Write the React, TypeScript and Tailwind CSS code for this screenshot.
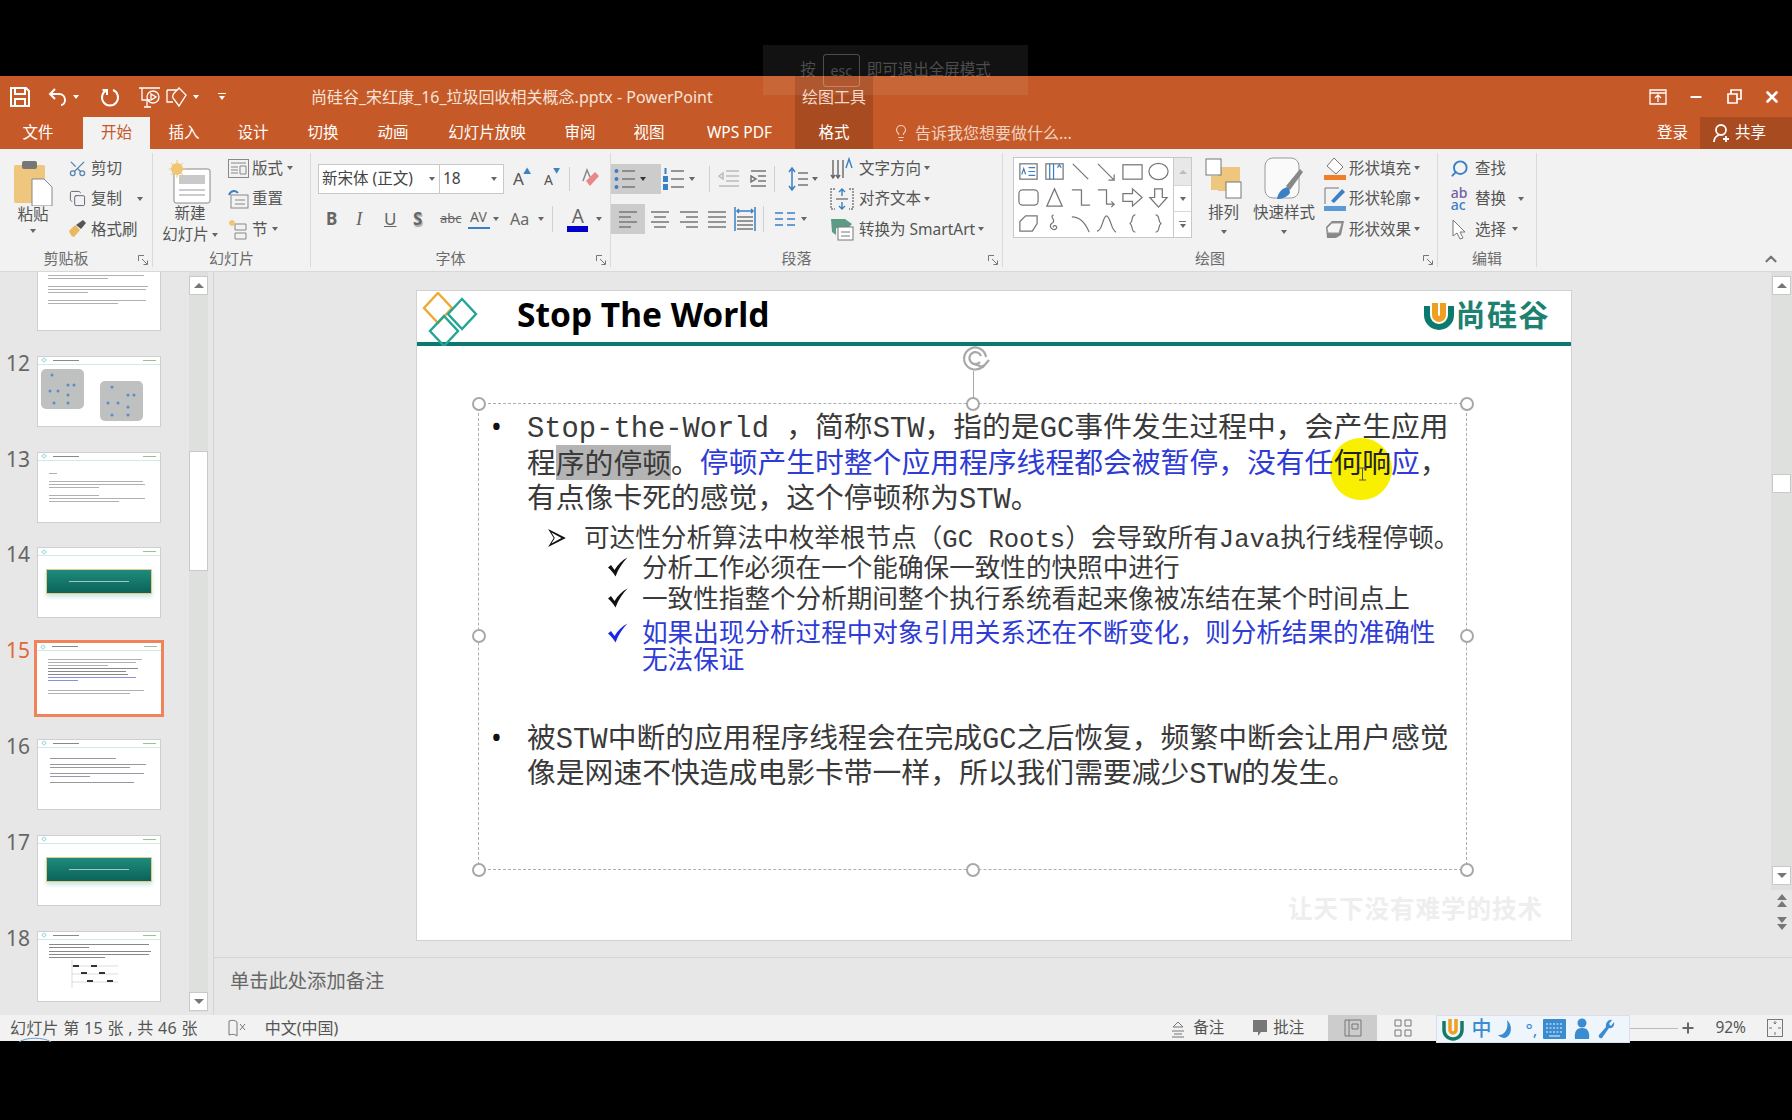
import type { ReactNode } from "react";
import { ChevronUp, Copy, Lightbulb, Scissors, Search, X, Minus, Plus } from "lucide-react";

const tabs = [
  { label: "文件", w: "w-[83px] pr-[7px]" },
  { label: "开始", w: "w-[67px]", active: true },
  { label: "插入", w: "w-[68px]" },
  { label: "设计", w: "w-[70px]" },
  { label: "切换", w: "w-[70px]" },
  { label: "动画", w: "w-[70px]" },
  { label: "幻灯片放映", w: "w-[118px]" },
  { label: "审阅", w: "w-[68px]" },
  { label: "视图", w: "w-[70px]" },
  { label: "WPS PDF", w: "w-[111px]" },
  { label: "格式", w: "w-[78px]", context: true },
];

function Caret({ className = "" }: { className?: string }) {
  return <span className={`inline-block h-0 w-0 border-x-[3.5px] border-t-[4px] border-x-transparent border-t-[#666] ${className}`} />;
}

function Group({ label, w, launcher, children }: { label: string; w: string; launcher?: boolean; children: ReactNode }) {
  return (
    <div className={`relative flex shrink-0 flex-col border-r border-[#D9DAD9] ${w}`}>
      <div className="flex h-[97px]">{children}</div>
      <div className={`flex h-[18px] items-center justify-center text-[15px] text-[#6b6b6b] ${launcher ? "pr-[20px]" : ""}`}>{label}</div>
      {launcher && (
        <svg className="absolute bottom-[2px] right-[4px] h-[10px] w-[10px]" viewBox="0 0 10 10" fill="none" stroke="#777">
          <path d="M.5 6V.5H6M4 4l5 5M5.5 9.5h4v-4" />
        </svg>
      )}
    </div>
  );
}

function Row({ icon, label, caret, gap = "gap-[3px]", iconBox = "w-[22px]" }: { icon: ReactNode; label: string; caret?: boolean; gap?: string; iconBox?: string }) {
  return (
    <div className={`flex h-[30.5px] items-center whitespace-nowrap text-[15.5px] text-[#555] ${gap}`}>
      <span className={`flex shrink-0 justify-center ${iconBox}`}>{icon}</span>
      <span>{label}</span>
      {caret && <Caret className="ml-[1px]" />}
    </div>
  );
}

function Lines({ rows, color = "#b0b0b0" }: { rows: number[]; color?: string }) {
  return (
    <div className="flex flex-col gap-[2px]">
      {rows.map((width, i) => (
        <div key={i} className="h-px" style={{ width, backgroundColor: color }} />
      ))}
    </div>
  );
}

function ThumbHeader({ title }: { title?: boolean }) {
  return (
    <div className="flex h-[8px] items-center justify-between border-b border-[#D3E9E3] px-[4px]">
      <span className="h-[4px] w-[4px] rotate-45 border border-[#9dd]" />
      {title && <span className="ml-[7px] mr-auto h-px w-[26px] bg-[#888]" />}
      <span className="h-px w-[13px] bg-[#9bbf8f]" />
    </div>
  );
}

function Banner() {
  return (
    <div className="mx-auto mt-[13px] flex h-[25px] w-[106px] items-center justify-center border border-[#E9C98A] bg-gradient-to-b from-[#1E8B7C] to-[#0B6358] shadow-[0_3px_4px_#cfe6e0]">
      <span className="h-px w-[60px] bg-white/60" />
    </div>
  );
}

function Thumb({ n, children, current, cut }: { n: number; children?: ReactNode; current?: boolean; cut?: boolean }) {
  return (
    <div className="flex h-[71px] shrink-0 items-start">
      <span className={`w-[37px] pl-[6px] text-[21px] leading-[15px] ${current ? "text-[#E0673A]" : "text-[#666]"} ${cut ? "invisible" : ""}`}>{n}</span>
      <div className={`h-[71px] w-[124px] overflow-hidden bg-white ${current ? "outline-[3px] outline-[#F0835A]" : "border border-[#CFCFCF]"}`}>{children}</div>
    </div>
  );
}

function ArrowButton({ dir, className = "" }: { dir: "up" | "down"; className?: string }) {
  return (
    <div className={`flex w-[19px] shrink-0 items-center justify-center border border-[#C9C9C9] bg-white ${className}`}>
      <span className={`h-0 w-0 border-x-[5px] border-x-transparent ${dir === "up" ? "border-b-[5px] border-b-[#777]" : "border-t-[5px] border-t-[#777]"}`} />
    </div>
  );
}

function Handle({ className }: { className: string }) {
  return <span className={`absolute z-20 h-[14px] w-[14px] rounded-full border-[2.5px] border-[#A8A8A8] bg-white ${className}`} />;
}

const Mono = ({ children }: { children: ReactNode }) => <span className="font-[family-name:'Liberation_Mono',monospace] leading-none">{children}</span>;

function SubItem({ mark, children, className = "" }: { mark: ReactNode; children: ReactNode; className?: string }) {
  return (
    <div className={`flex whitespace-nowrap ${className}`}>
      <span className="flex w-[64px] shrink-0 justify-center">{mark}</span>
      <div>{children}</div>
    </div>
  );
}

function CheckMark({ color = "#111" }: { color?: string }) {
  return (
    <svg className="mt-[3px] h-[22px] w-[22px]" viewBox="0 0 22 22" fill={color}>
      <path d="M1 11.500l3-2.500 3.500 5C11 8.500 15 4 20.500 1.500 15.500 6.500 11.500 12.500 8.500 20.500 6.500 17 4 14 1 11.500z" />
    </svg>
  );
}

function ListIcon({ numbered }: { numbered?: boolean }) {
  return (
    <svg className="h-[26px] w-[24px]" viewBox="0 0 24 26" stroke="#777" strokeWidth="1.3">
      <path d="M9 5h13M9 13h13M9 21h13" />
      {numbered ? (
        <g fill="#3B7FC4" stroke="none"><rect x="2.500" y="2" width="2" height="6" /><rect x="1" y="10" width="5" height="6" /><rect x="1" y="18" width="5" height="6" /></g>
      ) : (
        <g fill="#3B7FC4" stroke="none"><circle cx="3.500" cy="5" r="2" /><circle cx="3.500" cy="13" r="2" /><circle cx="3.500" cy="21" r="2" /></g>
      )}
    </svg>
  );
}

function AlignIcon({ rows }: { rows: string[] }) {
  return (
    <svg className="h-[20px] w-[22px]" viewBox="0 0 22 20" stroke="#777" strokeWidth="1.4">
      {rows.map((d, i) => <path key={i} d={d} />)}
    </svg>
  );
}

const gallery = [
  <g key="a"><rect x="3" y="4" width="18" height="16" /><path d="M5 15l2-6 2 6M12 8h7M12 12h7M12 16h7" stroke="#3B7FC4" /></g>,
  <g key="b"><rect x="3" y="4" width="18" height="16" /><path d="M7 4v16M11 4v16M15 8l2-3 2 3" stroke="#3B7FC4" /></g>,
  <path key="c" d="M4 4l16 16" />,
  <path key="d" d="M3 4l17 17M14 21h6v-6" />,
  <rect key="e" x="2" y="5" width="20" height="15" />,
  <ellipse key="f" cx="12" cy="12" rx="10" ry="8.500" />,
  <rect key="g" x="2" y="4" width="20" height="16" rx="4" />,
  <path key="h" d="M12 3l8 18H4z" />,
  <path key="i" d="M3 4h10v16h9" />,
  <path key="j" d="M3 4h9v15h8M17 16l3 3-3 3" />,
  <path key="k" d="M2 8h10V3l10 9-10 9v-5H2z" />,
  <path key="l" d="M8 3h8v9h5l-9 10-9-10h5z" />,
  <path key="m" d="M3 20V10l6-6h12v8l-5 8z" />,
  <path key="n" d="M11 3C6 5 15 9 9 12c-4 3 2 9 5 5 2-3-5-4-3-1" />,
  <path key="o" d="M3 5c8 0 14 6 18 16" />,
  <path key="p" d="M2 20C8 20 8 4 12 4s5 16 10 17" />,
  <path key="q" d="M15 3c-5 0-2 8-6 9 4 1 1 9 6 9" />,
  <path key="r" d="M9 3c5 0 2 8 6 9-4 1-1 9-6 9" />,
];

export default function App() {
  return (
    <div lang="zh-CN" className="relative flex h-[1120px] w-[1792px] flex-col overflow-hidden bg-black font-[family-name:'Noto_Sans','Noto_Sans_CJK_SC',sans-serif]">
      <div className="h-[76px] shrink-0" />

      {/* title bar */}
      <div className="relative flex h-[41px] shrink-0 items-center bg-[#C55A28] pl-[9px] text-white">
        <svg className="h-[22px] w-[22px]" viewBox="0 0 22 22" fill="none" stroke="#fff" strokeWidth="2"><path d="M2 2h15l3 3v15H2zM6 2v6h10V2M6 20v-7h10v7" /></svg>
        <svg className="ml-[17px] h-[20px] w-[20px]" viewBox="0 0 20 20" fill="none" stroke="#fff" strokeWidth="2"><path d="M7 2L2 7l5 5M2 7h9c4 0 6 3 6 6s-2 5-4 5" /></svg>
        <Caret className="ml-[5px] !border-t-white" />
        <svg className="ml-[21px] h-[20px] w-[20px]" viewBox="0 0 20 20" fill="none" stroke="#fff" strokeWidth="2"><path d="M7 3a8 8 0 1 0 6 0M7 2v6M2.500 3H7" /></svg>
        <svg className="ml-[18px] h-[24px] w-[24px]" viewBox="0 0 24 24" fill="none" stroke="#fff" strokeWidth="1.3"><path d="M1 3h21M4 3v12h8M13 22H6M9 16v6" /><circle cx="15" cy="12" r="6" /><path d="M13 9v6l5-3z" /></svg>
        <svg className="ml-[3px] h-[24px] w-[24px]" viewBox="0 0 24 24" fill="none" stroke="#fff" strokeWidth="1.3"><path d="M2 5h10M2 5v12h6" /><path d="M14 3l7 7-7 11-6-8c-2-4 3-6 6-10z" /></svg>
        <Caret className="ml-[4px] !border-t-white" />
        <span className="ml-[19px] flex flex-col items-center gap-[2px]"><span className="h-[1.5px] w-[8px] bg-white" /><Caret className="!border-t-white" /></span>
        <span className="absolute left-[311px] whitespace-nowrap text-[16px] text-[#F6E4DA]">尚硅谷_宋红康_16_垃圾回收相关概念.pptx - PowerPoint</span>
        <div className="absolute inset-y-0 left-[795px] flex w-[78px] items-center justify-center bg-[#A94B20] text-[16px] text-[#F4D8C8]">绘图工具</div>
        <div className="ml-auto flex items-center">
          <svg className="mr-[21px] h-[16px] w-[18px]" viewBox="0 0 18 16" fill="none" stroke="#fff" strokeWidth="1.3"><path d="M1 1h16v14H1zM1 4h16M9 13V7M6 9l3-3 3 3" /></svg>
          <Minus className="mr-[23px] h-[16px] w-[16px]" strokeWidth={3} />
          <svg className="mr-[21px] h-[15px] w-[15px]" viewBox="0 0 15 15" fill="none" stroke="#fff" strokeWidth="1.7"><path d="M1 5h9v9H1zM4 5V1h10v9h-4" /></svg>
          <X className="mr-[11px] h-[18px] w-[18px]" strokeWidth={3.5} />
        </div>
      </div>

      {/* tabs */}
      <div className="flex h-[32px] shrink-0 items-stretch bg-[#C55A28] text-[15.5px] text-white">
        {tabs.map((t) => (
          <div key={t.label} className={`flex items-center justify-center whitespace-nowrap ${t.w} ${t.active ? "bg-[#F1F2F1] text-[#C9562A]" : ""} ${t.context ? "bg-[#A94B20]" : ""}`}>
            {t.label}
          </div>
        ))}
        <div className="ml-[19px] flex items-center gap-[5px] text-[16px] text-[#F1D2C0]">
          <Lightbulb className="h-[18px] w-[18px]" strokeWidth={1.5} />
          告诉我您想要做什么...
        </div>
        <span className="ml-auto flex items-center pr-[12px] text-white">登录</span>
        <div className="flex w-[92px] items-center gap-[3px] bg-[#A94B20] pl-[12px]">
          <svg className="h-[20px] w-[20px]" viewBox="0 0 20 20" fill="none" stroke="#fff" strokeWidth="1.8"><circle cx="9" cy="7" r="5" /><path d="M2 19c0-4 2-6 5-7M14 13v6M11 16h6" /></svg>
          共享
        </div>
      </div>

      {/* ribbon */}
      <div className="relative flex h-[123px] shrink-0 border-b border-[#D8D8D8] bg-[#F1F2F1] py-[4px]">
        <Group label="剪贴板" w="w-[153px]" launcher>
          <div className="flex w-[66px] flex-col items-center pt-[7px] text-[15.5px] text-[#555]">
            <svg className="h-[46px] w-[40px]" viewBox="0 0 40 46">
              <rect x="1" y="5" width="31" height="38" rx="2" fill="#EFC67E" />
              <rect x="9" y="1" width="15" height="8" rx="2" fill="#777" />
              <path d="M19 19h12l8 8v19H19z" fill="#fff" stroke="#888" />
            </svg>
            <span className="-mt-[2px] leading-[20px]">粘贴</span>
            <Caret className="mt-[5px]" />
          </div>
          <div className="flex flex-col">
            <Row icon={<Scissors className="h-[19px] w-[19px] -scale-x-100 rotate-90 text-[#5A84B0]" strokeWidth={1.6} />} label="剪切" />
            <div className="flex items-center"><Row icon={<Copy className="h-[17px] w-[17px] text-[#667]" strokeWidth={1.4} />} label="复制" /><Caret className="ml-[15px]" /></div>
            <Row icon={<svg className="h-[20px] w-[20px]" viewBox="0 0 20 20"><path d="M2 12l6-6 5 5-6 7c-2 0-4-3-5-6z" fill="#E8B860" /><path d="M9 6l7-5 3 3-5 6z" fill="#555" /></svg>} label="格式刷" />
          </div>
        </Group>

        <Group label="幻灯片" w="w-[158px]">
          <div className="flex w-[74px] flex-col items-center pt-[7px] text-[15.5px] leading-[21px] text-[#555]">
            <svg className="h-[44px] w-[42px]" viewBox="0 0 42 44" fill="none">
              <rect x="5" y="9" width="36" height="34" rx="2" fill="#fff" stroke="#888" />
              <rect x="10" y="15" width="26" height="9" fill="#C9C9C9" />
              <path d="M10 30h26M10 35h26" stroke="#999" />
              <circle cx="8" cy="9" r="6" fill="#F0C674" />
              <path d="M8 0v18M-1 9h18M2 3l12 12M14 3L2 15" stroke="#F0C674" />
            </svg>
            <span className="-mt-[1px]">新建</span>
            <span className="flex items-center gap-[3px] whitespace-nowrap">幻灯片<Caret /></span>
          </div>
          <div className="flex flex-col">
            <Row caret icon={<svg className="h-[19px] w-[21px]" viewBox="0 0 21 19" fill="none" stroke="#888"><rect x=".5" y=".5" width="20" height="18" /><path d="M3 4h15M3 8h7M3 11h7M3 14h7M12 7h6v8h-6z" /></svg>} label="版式" />
            <Row icon={<svg className="h-[20px] w-[21px]" viewBox="0 0 21 20" fill="none" stroke="#888"><rect x="3" y="6" width="17" height="13" /><path d="M1 6c2-5 7-5 9-2" stroke="#3B7FC4" strokeWidth="2" /><path d="M7 11h10M7 15h10" /></svg>} label="重置" />
            <Row caret icon={<svg className="h-[21px] w-[20px]" viewBox="0 0 20 21" fill="none" stroke="#888"><path d="M7 5h11v6H7zM7 14h11v6H7z" /><circle cx="4" cy="4" r="2.500" fill="#F0C674" stroke="#F0C674" /></svg>} label="节" />
          </div>
        </Group>

        <Group label="字体" w="w-[300px]" launcher>
          <div className="flex flex-col pl-[7px] pt-[11px]">
            <div className="flex items-center">
              <div className="flex h-[30px] w-[122px] items-center justify-between border border-[#C8C8C8] bg-white pl-[3px] pr-[4px] text-[15.5px] text-[#444]">新宋体 (正文)<Caret /></div>
              <div className="flex h-[30px] w-[64px] items-center justify-between border border-l-0 border-[#C8C8C8] bg-white pl-[3px] pr-[6px] text-[15.5px] text-[#444]">18<Caret /></div>
              <span className="relative ml-[9px] w-[24px] text-[17px] text-[#555]">A<span className="absolute -top-[1px] left-[10px] text-[8px] text-[#3B7FC4]">▲</span></span>
              <span className="relative ml-[7px] w-[24px] text-[14px] text-[#555]">A<span className="absolute -top-[3px] left-[9px] text-[7px] text-[#3B7FC4]">▼</span></span>
              <span className="ml-[1px] h-[24px] w-px bg-[#D0D0D0]" />
              <svg className="ml-[10px] h-[22px] w-[22px]" viewBox="0 0 22 22"><path d="M10 18l9-10-4-4-9 9z" fill="#E9888A" /><path d="M3 13L7 2l3 7" fill="none" stroke="#888" strokeWidth="1.5" /></svg>
            </div>
            <div className="mt-[10px] flex h-[30px] items-center text-[17px] text-[#666]">
              <span className="ml-[8px] w-[27px] font-bold">B</span>
              <span className="w-[31px] pl-[3px] font-[family-name:'Liberation_Serif',serif] text-[19px] italic">I</span>
              <span className="w-[29px] underline">U</span>
              <span className="w-[27px] font-bold [text-shadow:1px_2px_1px_#aaa]">S</span>
              <span className="w-[25px] text-[13px] line-through">abc</span>
              <span className="flex w-[27px] flex-col items-center text-[14px] leading-[14px]">AV<span className="h-[5px] w-[22px] border-b-2 border-[#3B7FC4]" /></span>
              <Caret className="ml-[1px]" />
              <span className="ml-[11px] text-[16px]">Aa</span>
              <Caret className="ml-[9px]" />
              <span className="ml-[8px] h-[26px] w-px bg-[#D0D0D0]" />
              <span className="ml-[14px] flex w-[21px] flex-col items-center text-[19px] leading-[20px]">A<span className="h-[6px] w-[21px] bg-[#0000C8]" /></span>
              <Caret className="ml-[8px]" />
            </div>
          </div>
        </Group>

        <Group label="段落" w="w-[392px]" launcher>
          <div className="flex w-[216px] flex-col pt-[11px]">
            <div className="flex h-[30px] items-center">
              <span className="flex h-[30px] w-[50px] items-center gap-[3px] bg-[#CBCCCB] pl-[2px]"><ListIcon /><Caret className="!border-t-[#333]" /></span>
              <span className="ml-[1px] flex items-center gap-[3px]"><ListIcon numbered /><Caret /></span>
              <span className="ml-[14px] h-[26px] w-px bg-[#D0D0D0]" />
              <svg className="ml-[8px] h-[22px] w-[50px]" viewBox="0 0 50 22" strokeWidth="1.5" fill="none"><path d="M8 3h13M8 8h13M8 13h13M1 8l4-3v6zM1 18h20" stroke="#BBB" /><path d="M33 3h15M40 8h8M40 13h8M33 18h15M33 8l5 3-5 3z" stroke="#777" /></svg>
              <span className="ml-[6px] h-[26px] w-px bg-[#D0D0D0]" />
              <svg className="ml-[12px] h-[26px] w-[22px]" viewBox="0 0 22 26" strokeWidth="1.5" fill="none"><path d="M5 2v22M2 6l3-4 3 4M2 20l3 4 3-4" stroke="#3B7FC4" /><path d="M11 7h10M11 13h10M11 19h10" stroke="#777" /></svg>
              <Caret className="ml-[3px]" />
            </div>
            <div className="mt-[10px] flex h-[30px] items-center">
              <span className="flex h-[30px] w-[34px] items-center justify-center bg-[#CBCCCB]"><AlignIcon rows={["M2 3h18M2 8h12M2 13h18M2 18h12"]} /></span>
              <span className="ml-[4px]"><AlignIcon rows={["M2 3h18M5 8h12M2 13h18M5 18h12"]} /></span>
              <span className="ml-[7px]"><AlignIcon rows={["M2 3h18M8 8h12M2 13h18M8 18h12"]} /></span>
              <span className="ml-[6px]"><AlignIcon rows={["M2 3h18M2 8h18M2 13h18M2 18h18"]} /></span>
              <svg className="ml-[6px] h-[26px] w-[22px]" viewBox="0 0 22 26" strokeWidth="1.5" fill="none"><path d="M1 1v24M21 1v24M3 5h16M5 3L3 5l2 2M17 3l2 2-2 2" stroke="#3B7FC4" /><path d="M3 11h16M3 15h16M3 19h16M3 23h16" stroke="#777" /></svg>
              <span className="ml-[7px] h-[26px] w-px bg-[#D0D0D0]" />
              <svg className="ml-[10px] h-[20px] w-[22px]" viewBox="0 0 22 20" stroke="#3B7FC4" strokeWidth="1.5"><path d="M1 4h8M1 10h8M1 16h8M13 4h8M13 10h8M13 16h8" /></svg>
              <Caret className="ml-[5px]" />
            </div>
          </div>
          <div className="flex flex-col">
            <Row caret gap="gap-[2px]" iconBox="w-[30px]" icon={<svg className="h-[24px] w-[24px]" viewBox="0 0 24 24" fill="none" stroke="#666" strokeWidth="1.4"><path d="M3 4v18M8 4v18M13 4v18M1 19l2 3 2-3M6 19l2 3 2-3" /><path d="M16 12l3-9 3 9" stroke="#3B7FC4" /></svg>} label="文字方向" />
            <Row caret gap="gap-[2px]" iconBox="w-[30px]" icon={<svg className="h-[24px] w-[24px]" viewBox="0 0 24 24" fill="none" strokeWidth="1.4"><path d="M5 2H1v20h4M19 2h4v20h-4" stroke="#777" strokeDasharray="2 1" /><path d="M12 2v7M9 5l3-3 3 3M12 22v-7M9 19l3 3 3-3" stroke="#3B7FC4" /><path d="M6 12h12" stroke="#777" /></svg>} label="对齐文本" />
            <Row caret gap="gap-[2px]" iconBox="w-[30px]" icon={<svg className="h-[24px] w-[24px]" viewBox="0 0 24 24"><path d="M1 2h14l7 5-4 4H6v7l-4-3z" fill="#5C9C84" /><rect x="8" y="10" width="15" height="13" fill="#fff" stroke="#777" /><path d="M11 15h9M11 19h9" stroke="#777" /></svg>} label="转换为 SmartArt" />
          </div>
        </Group>

        <Group label="绘图" w="w-[435px]" launcher>
          <div className="ml-[10px] mt-[4px] flex h-[81px] w-[179px] border border-[#C8C8C8] bg-white">
            <div className="grid h-full w-[160px] grid-cols-6 grid-rows-3 items-center justify-items-center border-r border-[#C8C8C8] px-[1px]">
              {gallery.map((shape, i) => (
                <svg key={i} className="h-[23px] w-[23px]" viewBox="0 0 24 24" fill="none" stroke="#777" strokeWidth="1.3">{shape}</svg>
              ))}
            </div>
            <div className="flex flex-1 flex-col">
              <span className="flex h-[28px] items-center justify-center border-b border-[#D8D8D8] bg-[#E8E8E8]"><span className="h-0 w-0 border-x-[4px] border-b-[4px] border-x-transparent border-b-[#BBB]" /></span>
              <span className="flex h-[26px] items-center justify-center border-b border-[#D8D8D8]"><Caret /></span>
              <span className="flex flex-1 flex-col items-center justify-center gap-[2px]"><span className="h-px w-[7px] bg-[#777]" /><Caret /></span>
            </div>
          </div>
          <div className="ml-[4px] flex w-[55px] flex-col items-center pt-[5px] text-[15.5px] text-[#555]">
            <svg className="h-[42px] w-[38px]" viewBox="0 0 38 42"><rect x="13" y="9" width="22" height="24" fill="#EFC67E" /><rect x="6" y="18" width="12" height="14" fill="#EFC67E" /><rect x="1" y="1" width="15" height="16" fill="#fff" stroke="#777" /><rect x="21" y="24" width="15" height="16" fill="#fff" stroke="#777" /></svg>
            <span className="mt-[2px] leading-[20px]">排列</span>
            <Caret className="mt-[8px]" />
          </div>
          <div className="flex w-[66px] flex-col items-center pt-[4px] text-[15.5px] text-[#555]">
            <svg className="h-[44px] w-[40px]" viewBox="0 0 40 44"><rect x="1" y="1" width="34" height="40" rx="8" fill="#fafafa" stroke="#999" /><path d="M13 42c1-7 6-12 12-12l1 6c-3 4-8 6-13 6z" fill="#3B7FC4" /><path d="M26 33l-4-4L36 12l3 3z" fill="#888" /></svg>
            <span className="mt-[1px] leading-[20px]">快速样式</span>
            <Caret className="mt-[8px]" />
          </div>
          <div className="ml-[6px] flex flex-col">
            <Row caret gap="gap-[2px]" iconBox="w-[24px]" icon={<svg className="h-[24px] w-[22px]" viewBox="0 0 22 24"><path d="M10 2l9 9-7 7-9-8z" fill="#fff" stroke="#777" /><rect y="19" width="22" height="5" fill="#F07F2A" /></svg>} label="形状填充" />
            <Row caret gap="gap-[2px]" iconBox="w-[24px]" icon={<svg className="h-[24px] w-[22px]" viewBox="0 0 22 24" fill="none"><path d="M1 17V1h14" stroke="#777" /><path d="M7 14L18 2l3 3L10 16z" fill="#3B7FC4" /><rect y="19" width="22" height="5" fill="#5B9BD5" /></svg>} label="形状轮廓" />
            <Row caret gap="gap-[2px]" iconBox="w-[24px]" icon={<svg className="h-[20px] w-[22px]" viewBox="0 0 22 20"><path d="M2 8l6-6h12l-3 14-5 3H3z" fill="#888" /><path d="M3 9l5-5h10l-3 10H4z" fill="#F4F4F4" stroke="#999" /></svg>} label="形状效果" />
          </div>
        </Group>

        <Group label="编辑" w="w-[99px]">
          <div className="flex flex-col pl-[10px] text-[15.5px]">
            <Row gap="gap-[5px]" icon={<Search className="h-[19px] w-[19px] -scale-x-100 text-[#3B7FC4]" strokeWidth={2.4} />} label="查找" />
            <div className="flex items-center">
              <Row gap="gap-[5px]" icon={<span className="flex flex-col text-[14px] font-medium leading-[12px]"><span className="text-[#7360A8]">ab</span><span className="text-[#3B7FC4]">ac</span></span>} label="替换" />
              <Caret className="ml-[12px]" />
            </div>
            <Row gap="gap-[5px]" caret icon={<svg className="h-[21px] w-[16px]" viewBox="0 0 16 21" fill="#fff" stroke="#777"><path d="M2 1v16l4-3 3 6 3-1-3-6h5z" /></svg>} label="选择" />
          </div>
        </Group>

        <ChevronUp className="absolute bottom-[3px] right-[12px] h-[18px] w-[18px] text-[#777]" strokeWidth={3} />
      </div>

      {/* workspace */}
      <div className="flex h-[743px] shrink-0 bg-[#E6E7E6]">
        <div className="flex w-[214px] shrink-0 overflow-hidden border-r border-[#D5D5D5]">
          <div className="-mt-[12px] flex w-[189px] shrink-0 flex-col gap-[24.8px]">
            <Thumb n={11} cut>
              <div className="flex h-full flex-col gap-[7px] px-[10px] pt-[3px] blur-[0.4px]">
                <Lines rows={[100, 84]} color="#8890b8" />
                <Lines rows={[96, 60]} />
                <Lines rows={[100, 98, 40]} />
                <Lines rows={[98, 70]} />
              </div>
            </Thumb>
            <Thumb n={12}>
              <ThumbHeader title />
              <svg className="h-[62px] w-[122px] blur-[0.3px]" viewBox="0 0 122 62">
                <rect x="3" y="4" width="43" height="40" rx="5" fill="#BFC1C0" />
                <rect x="62" y="16" width="43" height="40" rx="5" fill="#BFC1C0" />
                <g fill="#5B8BC9"><circle cx="14" cy="10" r="1.500" /><circle cx="30" cy="20" r="1.500" /><circle cx="36" cy="20" r="1.500" /><circle cx="12" cy="26" r="1.500" /><circle cx="20" cy="26" r="1.500" /><circle cx="30" cy="30" r="1.500" /><circle cx="16" cy="38" r="1.500" /><circle cx="30" cy="38" r="1.500" /><circle cx="74" cy="22" r="1.500" /><circle cx="90" cy="30" r="1.500" /><circle cx="96" cy="30" r="1.500" /><circle cx="70" cy="38" r="1.500" /><circle cx="80" cy="38" r="1.500" /><circle cx="90" cy="42" r="1.500" /><circle cx="74" cy="50" r="1.500" /><circle cx="90" cy="50" r="1.500" /></g>
              </svg>
            </Thumb>
            <Thumb n={13}>
              <ThumbHeader title />
              <div className="flex flex-col gap-[7px] px-[11px] pt-[12px] blur-[0.4px]">
                <Lines rows={[8]} />
                <Lines rows={[94, 96, 50]} />
                <Lines rows={[50, 96, 70]} />
              </div>
            </Thumb>
            <Thumb n={14}>
              <ThumbHeader />
              <Banner />
            </Thumb>
            <Thumb n={15} current>
              <ThumbHeader title />
              <div className="flex flex-col gap-[2px] px-[11px] pt-[8px] blur-[0.3px]">
                <Lines rows={[94, 88, 60]} />
                <Lines rows={[90, 78, 80]} color="#888" />
                <Lines rows={[88, 30]} color="#8a90e0" />
                <div className="mt-[7px]"><Lines rows={[96, 82]} /></div>
              </div>
            </Thumb>
            <Thumb n={16}>
              <ThumbHeader title />
              <div className="flex flex-col gap-[5px] px-[12px] pt-[10px] blur-[0.3px]">
                <Lines rows={[66]} color="#999" />
                <Lines rows={[96, 80]} color="#999" />
                <Lines rows={[94, 40]} color="#99a" />
                <Lines rows={[84]} color="#999" />
              </div>
            </Thumb>
            <Thumb n={17}>
              <ThumbHeader />
              <Banner />
            </Thumb>
            <Thumb n={18}>
              <ThumbHeader title />
              <div className="flex flex-col gap-[3px] px-[11px] pt-[4px] blur-[0.3px]">
                <Lines rows={[100, 40]} color="#888" />
                <Lines rows={[102, 100, 56]} color="#888" />
              </div>
              <svg className="ml-[31px] mt-[2px] h-[30px] w-[52px]" viewBox="0 0 52 30" stroke="#bbb" strokeWidth="0.5">
                <path d="M3 6h46M3 14h46M3 22h46M3 0v28" />
                <path d="M4 6h6M22 6h6M12 13h6M30 13h6M18 21h6M38 21h6" stroke="#333" strokeWidth="2" />
              </svg>
            </Thumb>
          </div>
          <div className="flex h-[740px] w-[19px] shrink-0 flex-col self-start bg-[#DEE0DE] pt-[4px]">
            <ArrowButton dir="up" className="h-[19px]" />
            <div className="mt-[156px] h-[120px] w-[19px] border border-[#C9C9C9] bg-white" />
            <ArrowButton dir="down" className="mt-[421px] h-[19px]" />
          </div>
        </div>

        <div className="flex min-w-0 flex-1 flex-col">
          <div className="flex h-[686px] shrink-0 border-b border-[#D5D5D5]">
            <div className="flex-1 pl-[202px] pt-[18px]">
              {/* slide */}
              <div className="relative h-[651px] w-[1156px] border border-[#D2D2D2] bg-white text-[#3A3A3A]">
                <div className="flex h-[55px] items-center justify-between border-b-[4px] border-[#0B7A6E] pb-[3px] pl-[100px] pr-[21px]">
                  <h1 className="text-[33.5px] font-bold leading-none text-black">Stop The World</h1>
                  <div className="flex items-center gap-0">
                    <svg className="h-[34px] w-[34px]" viewBox="0 0 34 34" fill="none">
                      <path d="M5 8v9a12 12 0 0 0 24 0V8" stroke="#0B7A6E" strokeWidth="6" />
                      <path d="M13 5v12a4 4 0 0 0 8 0V5" stroke="#F0A020" strokeWidth="6" />
                    </svg>
                    <span className="text-[30px] font-bold leading-none tracking-[1.5px] text-[#1E8070]">尚硅谷</span>
                  </div>
                </div>
                <svg className="absolute left-[4px] top-[1px] h-[54px] w-[58px]" viewBox="0 0 58 54" fill="none" strokeWidth="2.4">
                  <path d="M17 1l14 15-14 15L3 16z" stroke="#F0A830" />
                  <path d="M41 7l14 15-14 15-14-15z" stroke="#22A595" />
                  <path d="M23 24l14 15-14 15L9 39z" stroke="#22A595" />
                </svg>

                {/* rotate handle */}
                <svg className="absolute left-[543px] top-[53px] h-[30px] w-[30px]" viewBox="0 0 30 30" fill="none" stroke="#A8A8A8" strokeWidth="2.200">
                  <path d="M24 21A11 11 0 1 1 26 13" />
                  <path d="M20 18a6 6 0 1 1 1-6" />
                  <path d="M14 20l9 3 6-7" />
                </svg>
                <span className="absolute left-[555.500px] top-[80px] h-[32px] w-px bg-[#A8A8A8]" />

                {/* laser pointer, sits behind the text */}
                <span className="absolute left-[913px] top-[147px] h-[62px] w-[62px] rounded-full bg-[#F8F000]" />

                {/* selected text box */}
                <div className="absolute left-[61px] top-[112px] h-[467px] w-[989px] border border-dashed border-[#ADADAD] pt-[5px]">
                  <Handle className="-left-[7.500px] -top-[7.500px]" />
                  <Handle className="left-[487px] -top-[7.500px]" />
                  <Handle className="-right-[7.500px] -top-[7.500px]" />
                  <Handle className="-left-[7.500px] top-[225px]" />
                  <Handle className="-right-[7.500px] top-[225px]" />
                  <Handle className="-left-[7.500px] -bottom-[7.500px]" />
                  <Handle className="left-[487px] -bottom-[7.500px]" />
                  <Handle className="-right-[7.500px] -bottom-[7.500px]" />

                  <div className="relative flex whitespace-nowrap text-[28.8px] leading-[34.500px]">
                    <span className="w-[48px] shrink-0 pl-[12px] text-[#111]">•</span>
                    <div>
                      <div><Mono>Stop-the-World </Mono>，简称<Mono>STW</Mono>，指的是<Mono>GC</Mono>事件发生过程中，会产生应用</div>
                      <div>程<span className="inline-block h-[35px] bg-[#B4B4B4] align-top leading-[35px]">序的停顿</span>。<span className="text-[#2E3BD6]">停顿产生时整个应用程序线程都会被暂停，没有任<span className="text-[#222]">何响</span>应</span>，</div>
                      <div>有点像卡死的感觉，这个停顿称为<Mono>STW</Mono>。</div>
                    </div>
                  </div>

                  <div className="relative ml-[41px] mt-[7px] text-[25.6px]">
                    <SubItem className="leading-[30px]" mark={<svg className="ml-[10px] mt-[5px] h-[20px] w-[20px]" viewBox="0 0 18 18" fill="#111"><path d="M1 1l16 8-16 8 5-8zM4 4l3 5-3 5 9-5z" fillRule="evenodd" /></svg>}>
                      可达性分析算法中枚举根节点（<Mono>GC Roots</Mono>）会导致所有<Mono>Java</Mono>执行线程停顿。
                    </SubItem>
                  </div>
                  <div className="relative ml-[99px] text-[25.6px]">
                    <SubItem className="leading-[30px]" mark={<span className="ml-[16px]"><CheckMark /></span>}>分析工作必须在一个能确保一致性的快照中进行</SubItem>
                    <SubItem className="mt-[1px] leading-[30px]" mark={<span className="ml-[16px]"><CheckMark /></span>}>一致性指整个分析期间整个执行系统看起来像被冻结在某个时间点上</SubItem>
                    <SubItem className="mt-[5px] leading-[27px] text-[#2E3BD6]" mark={<span className="ml-[16px]"><CheckMark color="#1A28E0" /></span>}>
                      如果出现分析过程中对象引用关系还在不断变化，则分析结果的准确性
                      <br />
                      无法保证
                    </SubItem>
                  </div>

                  <div className="relative mt-[48px] flex whitespace-nowrap text-[28.8px] leading-[31px]">
                    <span className="w-[48px] shrink-0 pl-[12px] text-[#111]">•</span>
                    <div>
                      <div>被<Mono>STW</Mono>中断的应用程序线程会在完成<Mono>GC</Mono>之后恢复，频繁中断会让用户感觉</div>
                      <div>像是网速不快造成电影卡带一样，所以我们需要减少<Mono>STW</Mono>的发生。</div>
                    </div>
                  </div>
                </div>

                {/* I-beam cursor */}
                <svg className="absolute left-[941px] top-[176px] h-[14px] w-[9px]" viewBox="0 0 9 14" fill="none" stroke="#555"><path d="M1 1h7M4.500 1v12M1 13h7" /></svg>

                <span className="absolute bottom-[12px] left-[871px] whitespace-nowrap text-[24.5px] font-bold tracking-[1px] text-[#EEEEEE]">让天下没有难学的技术</span>
              </div>
            </div>
            <div className="flex w-[21px] shrink-0 flex-col items-center bg-[#DEE0DE] pt-[4px]">
              <ArrowButton dir="up" className="h-[19px]" />
              <div className="mt-[179px] h-[22px] w-[19px] border border-[#C9C9C9] bg-white" />
              <ArrowButton dir="down" className="mt-[373px] h-[19px]" />
              <div className="mt-[5px] flex h-[76px] w-[21px] flex-col items-center gap-[8px] bg-[#E6E7E6] pt-[4px] text-[#777]">
                <svg className="h-[14px] w-[10px]" viewBox="0 0 10 14" fill="#777"><path d="M5 0l5 6H0zM5 7l5 6H0z" /></svg>
                <svg className="h-[14px] w-[10px]" viewBox="0 0 10 14" fill="#777"><path d="M5 14L0 8h10zM5 7L0 1h10z" /></svg>
              </div>
            </div>
          </div>
          <div className="flex flex-1 items-center pb-[10px] pl-[16px] text-[19.3px] text-[#666]">单击此处添加备注</div>
        </div>
      </div>

      {/* status bar */}
      <div className="relative flex h-[26px] shrink-0 items-center bg-[#F1F2F1] text-[15.5px] text-[#555]">
        <span className="ml-[10px] whitespace-nowrap text-[16px] tracking-[0.3px]">幻灯片 第 15 张 , 共 46 张</span>
        <svg className="ml-[30px] h-[18px] w-[19px]" viewBox="0 0 19 18" fill="none" stroke="#777"><path d="M9 3C7 1 4 1 1 2v14c3-1 6-1 8 1M9 3v14" /><path d="M12 5l5 6M17 5l-5 6" /></svg>
        <span className="ml-[18px] whitespace-nowrap text-[16px]">中文(中国)</span>
        <svg className="ml-auto h-[20px] w-[14px]" viewBox="0 0 14 20" fill="none" stroke="#777"><path d="M2 9l5-5 5 5zM1 13h12M3 16h8M1 19h12" /></svg>
        <span className="ml-[8px]">备注</span>
        <svg className="ml-[28px] h-[18px] w-[16px]" viewBox="0 0 16 18" fill="#777"><path d="M1 1h14v12H9l-3 4v-4H1z" /></svg>
        <span className="ml-[5px]">批注</span>
        <div className="ml-[24px] flex h-[26px] w-[49px] items-center justify-center bg-[#CBCCCB]">
          <svg className="h-[18px] w-[18px]" viewBox="0 0 18 18" fill="none" stroke="#777"><path d="M1 1h16v16H1zM5 1v16M8 5h6v5H8z" /></svg>
        </div>
        <svg className="ml-[17px] h-[18px] w-[18px]" viewBox="0 0 18 18" fill="none" stroke="#777"><path d="M1 1h6v6H1zM11 1h6v6h-6zM1 11h6v6H1zM11 11h6v6h-6z" /></svg>
        <div className="ml-[24px] flex h-[28px] w-[194px] items-center self-start border border-[#DDE] bg-[#EEF6FC] pl-[3px] text-[#3B8BD0]">
          <svg className="h-[26px] w-[26px]" viewBox="0 0 26 26" fill="none"><path d="M4 5v9a9 9 0 0 0 18 0V5" stroke="#157A6A" strokeWidth="3.500" /><path d="M10 3v11a3 3 0 0 0 6 0V3" stroke="#F0A020" strokeWidth="3.500" /></svg>
          <span className="ml-[5px] text-[20px] font-medium leading-none">中</span>
          <svg className="ml-[7px] h-[18px] w-[16px]" viewBox="0 0 16 18" fill="#3B8BD0"><path d="M9 0c6 5 5 16-2 18-3 0-6-2-7-3 6 1 11-6 9-15z" /></svg>
          <span className="ml-[11px] text-[17px] leading-none">°,</span>
          <svg className="ml-[6px] h-[20px] w-[23px]" viewBox="0 0 23 20"><rect width="23" height="20" rx="1" fill="#3B8BD0" /><path d="M3 5h17M3 9h17M3 13h17" stroke="#EEF6FC" strokeDasharray="2 1.500" /><path d="M6 17h11" stroke="#EEF6FC" /></svg>
          <svg className="ml-[8px] h-[22px] w-[16px]" viewBox="0 0 16 22" fill="#3B8BD0"><circle cx="8" cy="5" r="4.500" /><path d="M1 21c-1-8 2-11 7-11s8 3 7 11z" /></svg>
          <svg className="ml-[7px] h-[20px] w-[18px]" viewBox="0 0 18 20" fill="#3B8BD0"><path d="M17 3c1 4-2 7-5 6L5 19c-2 1-4-1-3-3l7-8c-1-4 3-8 6-7l-3 4 2 2z" /></svg>
        </div>
        <span className="h-px w-[48px] bg-[#BBB]" />
        <Plus className="ml-[2px] h-[16px] w-[16px] text-[#666]" strokeWidth={3} />
        <span className="ml-[19px] whitespace-nowrap">92%</span>
        <svg className="ml-[21px] mr-[9px] h-[18px] w-[16px]" viewBox="0 0 16 18" fill="none" stroke="#777"><rect x=".5" y=".5" width="15" height="17" /><path d="M8 2v3M6.500 3.500L8 5l1.500-1.500M8 16v-3M2 9h3M14 9h-3" /></svg>
        <svg className="absolute -bottom-[1px] left-[18px] h-[5px] w-[34px]" viewBox="0 0 34 5" fill="none" stroke="#6AA0D0"><path d="M1 5C8 0 26 0 33 5" /></svg>
      </div>

      {/* fullscreen hint overlay */}
      <div className="absolute left-[763px] top-[45px] flex h-[50px] w-[265px] items-center justify-center bg-white/[0.07] text-[15.5px] text-white/25">
        <span>按</span>
        <span className="mx-[7px] flex h-[33px] w-[37px] items-center justify-center rounded-[3px] border border-white/25 text-[14px]">esc</span>
        <span>即可退出全屏模式</span>
      </div>
    </div>
  );
}
